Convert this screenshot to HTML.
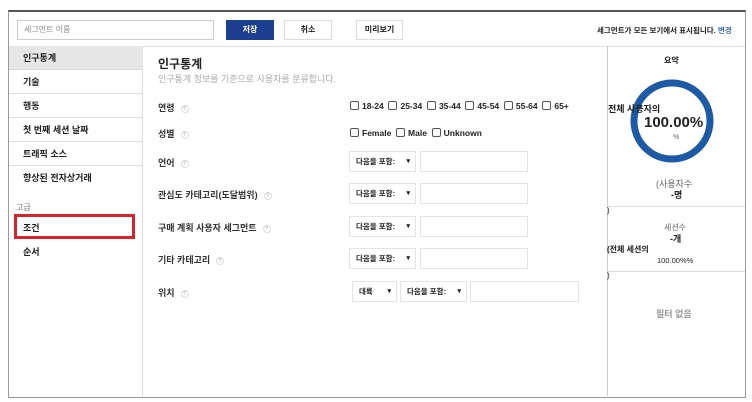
<!DOCTYPE html><html><head><meta charset="utf-8"><style>
*{margin:0;padding:0;box-sizing:border-box}
body{width:752px;height:402px;background:#fff;font-family:"Liberation Sans","Noto Sans CJK KR",sans-serif;position:relative;overflow:hidden;color:#222}
.a{position:absolute}
.frame{left:8px;top:10px;width:738px;height:388px;border:1px solid #999;border-top:2px solid #555}
.btn{position:absolute;top:20px;height:20px;border:1px solid #ddd;background:#fff;font-size:8px;text-align:center;line-height:18px;font-weight:bold}
.side{font-size:9px;font-weight:bold;left:9px;width:134px;height:24px;line-height:24px;padding-left:14px;border-bottom:1px solid #ddd}
.lbl{font-size:9px;font-weight:bold;left:158px;color:#333}
.q{display:inline-block;width:8px;height:8px;border-radius:50%;border:1px solid #ddd;font-size:5px;color:#bbb;text-align:center;line-height:6px;margin-left:6px;vertical-align:middle}
.dd{position:absolute;height:21px;border:1px solid #e4e4e4;font-size:7.5px;font-weight:bold;line-height:19px;padding-left:6px}
.dd:after{content:"▾";position:absolute;right:5px;font-size:7px}
.in{position:absolute;height:21px;border:1px solid #e4e4e4}
.cb{font-size:8.5px;left:350px;font-weight:bold}
.cb span{display:inline-block;width:9px;height:9px;border:1px solid #555;border-radius:2px;vertical-align:-1px;margin-right:3px}
</style></head><body>
<div class="a frame"></div>
<div class="a" style="left:9px;top:46px;width:736px;border-top:1px solid #ddd"></div>
<div class="a" style="left:17px;top:20px;width:197px;height:20px;border:1px solid #ccc;font-size:8px;color:#888;padding-left:6px;line-height:18px">세그먼트 이름</div>
<div class="btn" style="left:226px;width:48px;background:#1d3f8f;color:#fff;border-color:#1d3f8f">저장</div>
<div class="btn" style="left:284px;width:48px">취소</div>
<div class="btn" style="left:356px;width:47px">미리보기</div>
<div class="a" style="left:597px;top:25px;font-size:7.5px;font-weight:bold">세그먼트가 모든 보기에서 표시됩니다. <span style="color:#3a66b0">변경</span></div>
<div class="a" style="left:142px;top:46px;height:350px;border-left:1px solid #ddd"></div>
<div class="a side" style="top:46px;background:#e6e6e6">인구통계</div>
<div class="a side" style="top:70px">기술</div>
<div class="a side" style="top:94px">행동</div>
<div class="a side" style="top:118px">첫 번째 세션 날짜</div>
<div class="a side" style="top:142px">트래픽 소스</div>
<div class="a side" style="top:166px;border-bottom:none">향상된 전자상거래</div>
<div class="a" style="left:16px;top:202px;font-size:8px;color:#777">고급</div>
<div class="a" style="left:14px;top:214px;width:121px;height:25px;border:3px solid #d9222a"></div>
<div class="a" style="left:23px;top:221px;font-size:9px;font-weight:bold">조건</div>
<div class="a" style="left:23px;top:245px;font-size:9px;font-weight:bold">순서</div>
<div class="a" style="left:158px;top:55px;font-size:12px;font-weight:bold">인구통계</div>
<div class="a" style="left:158px;top:72px;font-size:9px;color:#aaa">인구통계 정보를 기준으로 사용자를 분류합니다.</div>
<div class="a lbl" style="top:101px">연령<span class="q">?</span></div>
<div class="a lbl" style="top:127px">성별<span class="q">?</span></div>
<div class="a lbl" style="top:156px">언어<span class="q">?</span></div>
<div class="a lbl" style="top:188px">관심도 카테고리(도달범위)<span class="q">?</span></div>
<div class="a lbl" style="top:221px">구매 계획 사용자 세그먼트<span class="q">?</span></div>
<div class="a lbl" style="top:253px">기타 카테고리<span class="q">?</span></div>
<div class="a lbl" style="top:286px">위치<span class="q">?</span></div>
<div class="a cb" style="top:101px"><span></span>18-24 &nbsp;<span></span>25-34 &nbsp;<span></span>35-44 &nbsp;<span></span>45-54 &nbsp;<span></span>55-64 &nbsp;<span></span>65+</div>
<div class="a cb" style="top:128px"><span></span>Female &nbsp;<span></span>Male &nbsp;<span></span>Unknown</div>
<div class="dd" style="left:349px;top:151px;width:67px">다음을 포함:</div><div class="in" style="left:420px;top:151px;width:108px"></div>
<div class="dd" style="left:349px;top:183px;width:67px">다음을 포함:</div><div class="in" style="left:420px;top:183px;width:108px"></div>
<div class="dd" style="left:349px;top:216px;width:67px">다음을 포함:</div><div class="in" style="left:420px;top:216px;width:108px"></div>
<div class="dd" style="left:349px;top:248px;width:67px">다음을 포함:</div><div class="in" style="left:420px;top:248px;width:108px"></div>
<div class="dd" style="left:352px;top:281px;width:45px">대륙</div>
<div class="dd" style="left:400px;top:281px;width:67px">다음을 포함:</div><div class="in" style="left:470px;top:281px;width:109px"></div>
<div class="a" style="left:607px;top:46px;height:350px;border-left:1px solid #ccc"></div>
<div class="a" style="left:607px;top:206px;width:138px;border-top:1px solid #ddd"></div>
<div class="a" style="left:607px;top:271px;width:138px;border-top:1px solid #ddd"></div>
<div class="a" style="left:664px;top:55px;font-size:8px;font-weight:bold">요약</div>
<svg class="a" style="left:629px;top:78px" width="86" height="86"><circle cx="43" cy="43" r="38" fill="none" stroke="#1c5aa6" stroke-width="7"/></svg>
<div class="a" style="left:608px;top:102px;font-size:9px;font-weight:bold">전체 사용자의</div>
<div class="a" style="left:644px;top:114px;font-size:15px;font-weight:bold">100.00%</div>
<div class="a" style="left:673px;top:134px;font-size:7px;color:#666">%</div>
<div class="a" style="left:656px;top:177px;font-size:9px;color:#666">(사용자수</div>
<div class="a" style="left:671px;top:188px;font-size:9px;font-weight:bold">-명</div>
<div class="a" style="left:607px;top:206px;font-size:8px">)</div>
<div class="a" style="left:664px;top:222px;font-size:8px;color:#666">세션수</div>
<div class="a" style="left:670px;top:232px;font-size:9px;font-weight:bold">-개</div>
<div class="a" style="left:607px;top:244px;font-size:8px;font-weight:bold">(전체 세션의</div>
<div class="a" style="left:657px;top:256px;font-size:7.5px">100.00%%</div>
<div class="a" style="left:607px;top:271px;font-size:8px">)</div>
<div class="a" style="left:656px;top:307px;font-size:9px;color:#999;font-weight:bold">필터 없음</div>
</body></html>
